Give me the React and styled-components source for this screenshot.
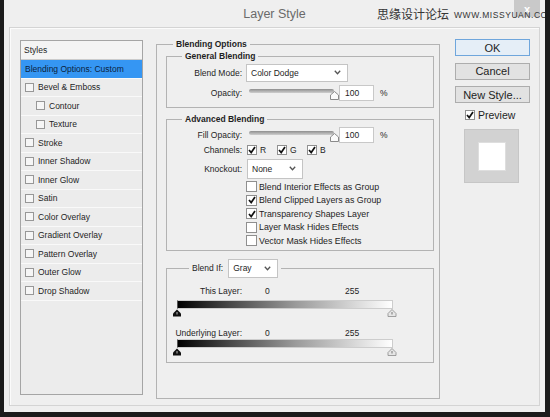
import React from "react";
import styled, { createGlobalStyle } from "styled-components";

const GlobalStyle = createGlobalStyle`
    html, body {
        margin: 0;
        padding: 0;
        background: #1b1b1b;
    }
    body {
        font-family: "Liberation Sans", Arial, sans-serif;
        color: #1e1e1e;
    }
    * {
        box-sizing: border-box;
    }
`;

const Page = styled.div`
    width: 550px;
    height: 417px;
    padding-left: 4px;
    background: #1b1b1b;
    overflow: hidden;
`;

const Dialog = styled.div`
    width: 541px;
    height: 412px;
    background: #efefef;
    display: flex;
    flex-direction: column;
    overflow: hidden;
`;

const TitleBar = styled.div`
    position: relative;
    height: 27px;
    flex-shrink: 0;
    display: grid;
    grid-template-columns: 1fr auto 1fr;
    align-items: start;
`;

const Title = styled.div`
    grid-column: 2;
    padding-top: 7px;
    font-size: 12.5px;
    color: #6a6a6a;
`;

const CloseButton = styled.div`
    grid-column: 3;
    justify-self: end;
    width: 26px;
    height: 17px;
    margin-right: 5px;
    background: #c9c9c9;
    color: #fff;
    font-size: 11px;
    font-weight: bold;
    display: flex;
    align-items: center;
    justify-content: center;
`;

const Watermark = styled.div`
    position: absolute;
    left: 373px;
    top: 7px;
    display: flex;
    align-items: center;
    white-space: nowrap;
    color: #353535;

    span:first-child {
        font-family: "Noto Sans CJK SC", sans-serif;
        font-size: 12px;
        line-height: 14px;
    }
    span:last-child {
        margin-left: 5px;
        margin-top: 2px;
        font-size: 8.5px;
        letter-spacing: 0.55px;
    }
`;

const Frame = styled.div`
    flex: 1;
    min-height: 0;
    margin: 0 5px 6px;
    border: 1px solid #d4d4d4;
    box-shadow: inset 1px 1px 0 #fbfbfb;
    padding: 12px 9px 0 10px;
    display: flex;
    align-items: flex-start;
`;

/* ---------- styles list ---------- */

const StylesPanel = styled.div`
    width: 123px;
    height: 355px;
    flex-shrink: 0;
    border: 1px solid #a5a5a5;
    background: #ececec;
    font-size: 8.5px;
`;

const StylesHeader = styled.div`
    height: 19px;
    padding-left: 3px;
    display: flex;
    align-items: center;
    background: #f4f4f4;
    border-bottom: 1px solid #cbcbcb;
`;

const StyleRow = styled.div`
    height: 18.5px;
    display: flex;
    align-items: center;
    gap: 4px;
    padding-left: ${(p) => (p.$indent ? 15 : 4)}px;
    border-bottom: 1px solid #f9f9f9;
    background: ${(p) => (p.$active ? "#3596f3" : "transparent")};
    color: ${(p) => (p.$active ? "#0b1f3d" : "#1e1e1e")};
`;

const SmallBox = styled.span`
    width: 9px;
    height: 9px;
    border: 1px solid #979797;
    background: #f6f6f6;
    flex-shrink: 0;
`;

/* ---------- middle groups ---------- */

const Group = styled.fieldset`
    margin: ${(p) => p.$margin || "0"};
    padding: ${(p) => p.$pad || "0"};
    border: 1px solid #b3b3b3;
    min-width: 0;
    width: ${(p) => p.$width}px;
    height: ${(p) => (p.$height ? `${p.$height}px` : "auto")};
    flex-shrink: 0;
    display: flex;
    flex-direction: column;
`;

const Legend = styled.legend`
    margin-left: ${(p) => p.$offset}px;
    padding: 0 3px;
    font-size: 8.5px;
    font-weight: bold;
    line-height: 11px;
    display: flex;
    align-items: center;
    gap: 5px;
`;

const LegendLabel = styled.span`
    font-weight: normal;
`;

const Main = styled.div`
    margin-left: 13px;
    margin-top: -1.5px;
    flex-shrink: 0;
`;

const FieldRow = styled.div`
    display: grid;
    grid-template-columns: 75px auto;
    column-gap: 4px;
    align-items: center;
    height: ${(p) => p.$h}px;
    margin-top: ${(p) => p.$mt || 0}px;
    font-size: 8.5px;
`;

const Label = styled.span`
    text-align: right;
    white-space: nowrap;
`;

const Controls = styled.div`
    display: flex;
    align-items: center;
    margin-left: ${(p) => p.$ml || 0}px;
`;

const SelectBox = styled.div`
    width: ${(p) => p.$w}px;
    height: ${(p) => p.$h}px;
    margin-left: ${(p) => p.$ml || 0}px;
    background: #fff;
    border: 1px solid #c4c4c4;
    display: flex;
    align-items: center;
    justify-content: space-between;
    padding: 0 6px 0 4px;
    font-size: 8.5px;
    font-weight: normal;
    color: #1e1e1e;
`;

const NumberInput = styled.div`
    width: 35px;
    height: 16px;
    background: #fff;
    border: 1px solid #c8c8c8;
    padding-left: 5px;
    display: flex;
    align-items: center;
`;

const Percent = styled.span`
    margin-left: 6px;
`;

const ChannelItem = styled.label`
    width: 30px;
    display: flex;
    align-items: center;
    gap: 3px;
`;

const CheckList = styled.div`
    margin-top: 1.5px;
    padding-left: 79px;
    font-size: 8.8px;
`;

const CheckRow = styled.div`
    height: 13.5px;
    display: flex;
    align-items: center;
    gap: 2px;
`;

const Box = styled.span`
    width: ${(p) => p.$size || 10}px;
    height: ${(p) => p.$size || 10}px;
    border: 1px solid #8f8f8f;
    background: #fff;
    flex-shrink: 0;
    display: inline-flex;
    align-items: center;
    justify-content: center;
`;

/* ---------- blend if ---------- */

const RangeRow = styled.div`
    display: grid;
    grid-template-columns: 75px 57px auto;
    column-gap: 23px;
    align-items: center;
    height: 12px;
    margin-top: ${(p) => p.$mt}px;
    font-size: 8.5px;
`;

const RangeBlock = styled.div`
    margin-top: ${(p) => p.$mt}px;
    padding-left: 10px;
`;

const GradientBar = styled.div`
    width: 216px;
    height: 9px;
    border: 1px solid #cdcdcd;
    border-left-color: #555;
    background: linear-gradient(to right, #000 0%, #4a4a4a 25%, #9a9a9a 55%, #ffffff 100%);
`;

const Markers = styled.svg`
    display: block;
    margin-left: -4px;
`;

/* ---------- right buttons ---------- */

const ButtonColumn = styled.div`
    margin-left: 15px;
    margin-top: -1px;
    width: 75px;
    flex-shrink: 0;
    display: flex;
    flex-direction: column;
    gap: 6.5px;
`;

const Button = styled.div`
    height: 17px;
    flex-shrink: 0;
    display: flex;
    align-items: center;
    justify-content: center;
    font-size: 11px;
    color: #1e1e1e;
    background: ${(p) => (p.$primary ? "#e5eef7" : "#e2e2e2")};
    border: 1px solid ${(p) => (p.$primary ? "#6fa6dc" : "#adadad")};
`;

const PreviewToggle = styled.label`
    margin: -1px 0 0 10px;
    display: flex;
    align-items: center;
    gap: 3px;
    font-size: 10.5px;
`;

const Swatch = styled.div`
    margin: 2px 0 0 9px;
    width: 55px;
    height: 54px;
    flex-shrink: 0;
    background: #d2d2d2;
    border: 1px solid #c6c6c6;
    display: flex;
    align-items: center;
    justify-content: center;

    &::after {
        content: "";
        width: 26px;
        height: 27px;
        background: #fff;
        border: 1px solid #dedede;
    }
`;

/* ---------- drawings ---------- */

const Check = ({ checked, size }) => (
    <Box $size={size}>
        {checked && (
            <svg width="8" height="8" viewBox="0 0 8 8">
                <polyline points="1,4 3.2,6.6 7,1" fill="none" stroke="#111" strokeWidth="1.7" />
            </svg>
        )}
    </Box>
);

const Chevron = () => (
    <svg width="7" height="5" viewBox="0 0 7 5">
        <polyline points="0.8,0.8 3.5,3.8 6.2,0.8" fill="none" stroke="#555" strokeWidth="1.3" />
    </svg>
);

const Slider = () => (
    <svg width="93" height="16" viewBox="0 0 93 16">
        <defs>
            <linearGradient id="track" x1="0" y1="0" x2="0" y2="1">
                <stop offset="0" stopColor="#8e8e8e" />
                <stop offset="1" stopColor="#cfcfcf" />
            </linearGradient>
        </defs>
        <rect x="3" y="4" width="85" height="4" rx="2" fill="url(#track)" />
        <path d="M88.5 6.5 L92.5 10 V14.5 H84.5 V10 Z" fill="#fafafa" stroke="#8a8a8a" />
    </svg>
);

const RangeMarkers = () => (
    <Markers width="224" height="8" viewBox="0 0 224 8">
        <path d="M4 0.5 L8 4.5 V7.5 H0 V4.5 Z" fill="#111" />
        <path d="M4 3 V5.5" stroke="#bbb" strokeWidth="1" />
        <path d="M219 0.5 L223 4.5 V7.5 H215 V4.5 Z" fill="#e6e6e6" stroke="#8c8c8c" strokeWidth="0.8" />
        <path d="M219 3 V5.5" stroke="#777" strokeWidth="1" />
    </Markers>
);

const styleItems = [
    { label: "Bevel & Emboss" },
    { label: "Contour", indent: true },
    { label: "Texture", indent: true },
    { label: "Stroke" },
    { label: "Inner Shadow" },
    { label: "Inner Glow" },
    { label: "Satin" },
    { label: "Color Overlay" },
    { label: "Gradient Overlay" },
    { label: "Pattern Overlay" },
    { label: "Outer Glow" },
    { label: "Drop Shadow" },
];

const advancedChecks = [
    { label: "Blend Interior Effects as Group", checked: false },
    { label: "Blend Clipped Layers as Group", checked: true },
    { label: "Transparency Shapes Layer", checked: true },
    { label: "Layer Mask Hides Effects", checked: false },
    { label: "Vector Mask Hides Effects", checked: false },
];

const OpacityControl = () => (
    <Controls>
        <Slider />
        <NumberInput>100</NumberInput>
        <Percent>%</Percent>
    </Controls>
);

const App = () => {
    return (
        <>
            <GlobalStyle />
            <Page>
                <Dialog>
                    <TitleBar>
                        <Title>Layer Style</Title>
                        <CloseButton>x</CloseButton>
                        <Watermark>
                            <span>思缘设计论坛</span>
                            <span>WWW.MISSYUAN.COM</span>
                        </Watermark>
                    </TitleBar>
                    <Frame>
                        <StylesPanel>
                            <StylesHeader>Styles</StylesHeader>
                            <StyleRow $active>Blending Options: Custom</StyleRow>
                            {styleItems.map((item) => (
                                <StyleRow key={item.label} $indent={item.indent}>
                                    <SmallBox />
                                    {item.label}
                                </StyleRow>
                            ))}
                        </StylesPanel>

                        <Main>
                            <Group $width={284} $height={360} $pad="1px 6px 0 9px">
                                <Legend $offset={7}>Blending Options</Legend>

                                <Group $width={268} $pad="2px 0 6px 0">
                                    <Legend $offset={15}>General Blending</Legend>
                                    <FieldRow $h={18}>
                                        <Label>Blend Mode:</Label>
                                        <SelectBox $w={102} $h={18}>
                                            Color Dodge
                                            <Chevron />
                                        </SelectBox>
                                    </FieldRow>
                                    <FieldRow $h={16} $mt={3}>
                                        <Label>Opacity:</Label>
                                        <OpacityControl />
                                    </FieldRow>
                                </Group>

                                <Group $width={268} $margin="6px 0 0" $pad="2px 0 2px 0">
                                    <Legend $offset={15}>Advanced Blending</Legend>
                                    <FieldRow $h={16}>
                                        <Label>Fill Opacity:</Label>
                                        <OpacityControl />
                                    </FieldRow>
                                    <FieldRow $h={14}>
                                        <Label>Channels:</Label>
                                        <Controls $ml={1}>
                                            {["R", "G", "B"].map((c) => (
                                                <ChannelItem key={c}>
                                                    <Check checked />
                                                    {c}
                                                </ChannelItem>
                                            ))}
                                        </Controls>
                                    </FieldRow>
                                    <FieldRow $h={20} $mt={2}>
                                        <Label>Knockout:</Label>
                                        <SelectBox $w={56} $h={20} $ml={1}>
                                            None
                                            <Chevron />
                                        </SelectBox>
                                    </FieldRow>
                                    <CheckList>
                                        {advancedChecks.map((c) => (
                                            <CheckRow key={c.label}>
                                                <Check checked={c.checked} size={11} />
                                                {c.label}
                                            </CheckRow>
                                        ))}
                                    </CheckList>
                                </Group>

                                <Group $width={268} $margin="8px 0 0" $pad="0 0 6px 0">
                                    <Legend $offset={22}>
                                        <LegendLabel>Blend If:</LegendLabel>
                                        <SelectBox $w={50} $h={19}>
                                            Gray
                                            <Chevron />
                                        </SelectBox>
                                    </Legend>
                                    <RangeRow $mt={7}>
                                        <Label>This Layer:</Label>
                                        <span>0</span>
                                        <span>255</span>
                                    </RangeRow>
                                    <RangeBlock $mt={3}>
                                        <GradientBar />
                                        <RangeMarkers />
                                    </RangeBlock>
                                    <RangeRow $mt={10}>
                                        <Label>Underlying Layer:</Label>
                                        <span>0</span>
                                        <span>255</span>
                                    </RangeRow>
                                    <RangeBlock $mt={0}>
                                        <GradientBar />
                                        <RangeMarkers />
                                    </RangeBlock>
                                </Group>
                            </Group>
                        </Main>

                        <ButtonColumn>
                            <Button $primary>OK</Button>
                            <Button>Cancel</Button>
                            <Button>New Style...</Button>
                            <PreviewToggle>
                                <Check checked />
                                Preview
                            </PreviewToggle>
                            <Swatch />
                        </ButtonColumn>
                    </Frame>
                </Dialog>
            </Page>
        </>
    );
};

export default App;
